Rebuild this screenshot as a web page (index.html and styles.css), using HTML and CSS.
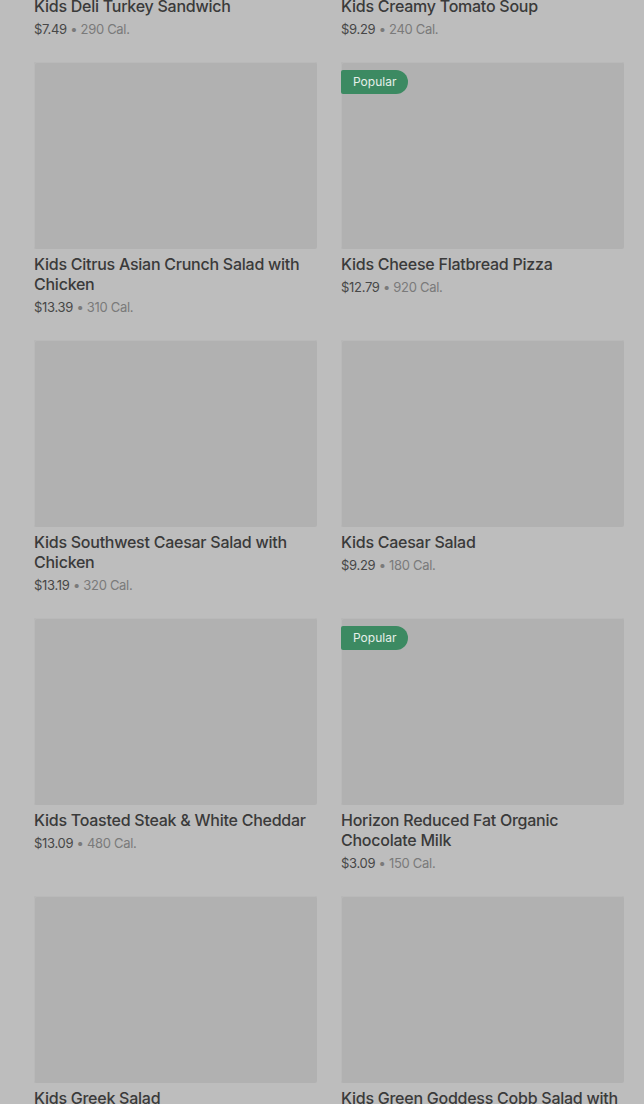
FILE: index.html
```html
<!DOCTYPE html>
<html lang="en">
<head>
    <meta charset="UTF-8">
    <meta name="viewport" content="width=device-width, initial-scale=1.0">
    <title>Kids Menu</title>
    <link rel="stylesheet" href="styles.css">
</head>
<body>
    <div class="menu-grid">
        <div class="item">
            <div class="item-image"></div>
            <div class="item-name">Kids Deli Turkey Sandwich</div>
            <div class="item-meta"><span class="price">$7.49</span> &bull; 290 Cal.</div>
        </div>
        <div class="item">
            <div class="item-image"></div>
            <div class="item-name">Kids Creamy Tomato Soup</div>
            <div class="item-meta"><span class="price">$9.29</span> &bull; 240 Cal.</div>
        </div>

        <div class="item">
            <div class="item-image"></div>
            <div class="item-name">Kids Citrus Asian Crunch Salad with Chicken</div>
            <div class="item-meta"><span class="price">$13.39</span> &bull; 310 Cal.</div>
        </div>
        <div class="item">
            <div class="item-image"><span class="badge">Popular</span></div>
            <div class="item-name">Kids Cheese Flatbread Pizza</div>
            <div class="item-meta"><span class="price">$12.79</span> &bull; 920 Cal.</div>
        </div>

        <div class="item">
            <div class="item-image"></div>
            <div class="item-name">Kids Southwest Caesar Salad with Chicken</div>
            <div class="item-meta"><span class="price">$13.19</span> &bull; 320 Cal.</div>
        </div>
        <div class="item">
            <div class="item-image"></div>
            <div class="item-name">Kids Caesar Salad</div>
            <div class="item-meta"><span class="price">$9.29</span> &bull; 180 Cal.</div>
        </div>

        <div class="item">
            <div class="item-image"></div>
            <div class="item-name">Kids Toasted Steak &amp; White Cheddar</div>
            <div class="item-meta"><span class="price">$13.09</span> &bull; 480 Cal.</div>
        </div>
        <div class="item">
            <div class="item-image"><span class="badge">Popular</span></div>
            <div class="item-name">Horizon Reduced Fat Organic Chocolate Milk</div>
            <div class="item-meta"><span class="price">$3.09</span> &bull; 150 Cal.</div>
        </div>

        <div class="item">
            <div class="item-image"></div>
            <div class="item-name">Kids Greek Salad</div>
            <div class="item-meta"><span class="price">$9.29</span> &bull; 210 Cal.</div>
        </div>
        <div class="item">
            <div class="item-image"></div>
            <div class="item-name">Kids Green Goddess Cobb Salad with Chicken</div>
            <div class="item-meta"><span class="price">$13.39</span> &bull; 330 Cal.</div>
        </div>
    </div>
</body>
</html>
```

FILE: styles.css
```css
html, body {
    height: 100%;
    overflow: hidden;
}

body {
    font-family: Inter, "Noto Sans", sans-serif;
    margin: 0;
    padding: 0;
    background-color: #bdbdbd;
    color: #3b3b3b;
}

.menu-grid {
    display: grid;
    grid-template-columns: 283px 283px;
    column-gap: 24px;
    row-gap: 24px;
    padding: 0 20px 0 34px;
    margin-top: -196px;
}

.item {
    display: flex;
    flex-direction: column;
}

.item-image {
    position: relative;
    height: 187px;
    background-color: #b1b1b1;
    border-radius: 2px;
    box-shadow: inset 1px 1px 0 #b9b9b9;
}

.badge {
    position: absolute;
    top: 8px;
    left: 0;
    height: 24px;
    line-height: 24px;
    padding: 0 12px;
    font-size: 12px;
    color: #e6efe9;
    background-color: #3c8a62;
    border-radius: 2px 12px 12px 2px;
}

.item-name {
    margin-top: 5px;
    font-size: 16px;
    font-weight: 500;
    line-height: 20px;
    letter-spacing: -0.25px;
    color: #3a3a3a;
}

.item-meta {
    margin-top: 4px;
    font-size: 13px;
    line-height: 18px;
    letter-spacing: -0.3px;
    color: #7a7a7a;
}

.price {
    color: #474747;
}
```
